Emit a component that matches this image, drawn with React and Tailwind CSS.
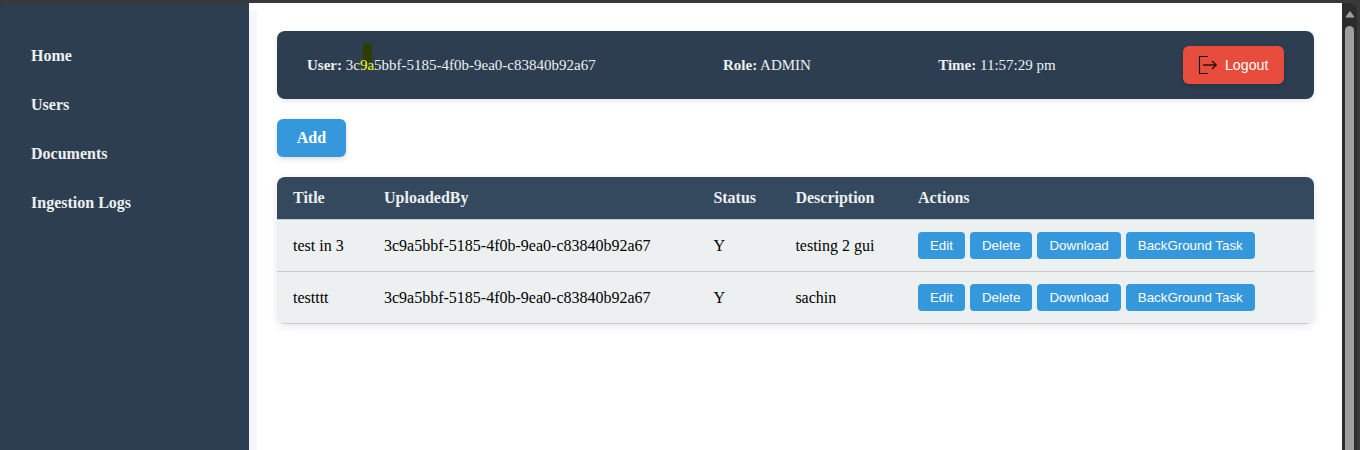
const navItems = ["Home", "Users", "Documents", "Ingestion Logs"];
const actions = ["Edit", "Delete", "Download", "BackGround Task"];
const owner = "3c9a5bbf-5185-4f0b-9ea0-c83840b92a67";
const rows = [
  { title: "test in 3", description: "testing 2 gui" },
  { title: "testttt", description: "sachin" },
];
const grid =
  "grid grid-cols-[91px_329.4px_82px_122.6px_1fr] items-center *:px-4";

function Sidebar() {
  return (
    <nav className="flex w-[249px] shrink-0 flex-col gap-[25px] rounded-tl-lg bg-[#2d3e50] pt-[41px] pl-[31px] font-bold text-[#ecf0f1]">
      {navItems.map((item) => (
        <a key={item}>{item}</a>
      ))}
    </nav>
  );
}

function LogoutIcon() {
  return (
    <svg width="20" height="20" viewBox="0 0 20 20" fill="none" className="shrink-0">
      <path d="M10 1.5H1.5V18.5H10" stroke="#000" strokeWidth="1.1" />
      <path d="M5 10H18" stroke="#000" strokeOpacity=".6" strokeWidth="2" />
      <path d="M14 6L18.2 10L14 14" stroke="#000" strokeOpacity=".85" strokeWidth="1.3" />
    </svg>
  );
}

function Header() {
  return (
    <header className="flex h-[68px] items-center justify-between rounded-lg bg-[#2d3e50] px-[30px] text-[15px] text-[#ecf0f1] shadow-[0_2px_5px_rgba(0,0,0,0.1)]">
      <div className="relative isolate">
        <b>User:</b> {owner.slice(0, 2)}
        <span className="text-[#f8fc00]">{owner.slice(2, 4)}</span>
        {owner.slice(4)}
        <span className="absolute top-[-11px] left-14 -z-10 h-[19px] w-[9px] bg-[#2d3e00]" />
      </div>
      <div>
        <b>Role:</b> ADMIN
      </div>
      <div>
        <b>Time:</b> 11:57:29 pm
      </div>
      <button className="flex h-[38px] w-[101px] items-center gap-[7px] rounded-md bg-[#e84c3d] pl-[15px] font-['Liberation_Sans',Arial,sans-serif] text-[14.2px] text-white shadow-[0_2px_4px_rgba(0,0,0,0.2)]">
        <LogoutIcon />
        <span className="pt-px">Logout</span>
      </button>
    </header>
  );
}

function DocumentTable() {
  return (
    <section className="mt-5 overflow-hidden rounded-lg bg-[#ecf0f1] text-black shadow-[0_2px_8px_rgba(0,0,0,0.1)]">
      <div className={`${grid} h-[43px] border-b border-[#c8cccf] bg-[#34495e] font-bold text-[#ecf0f1]`}>
        <span>Title</span>
        <span>UploadedBy</span>
        <span>Status</span>
        <span>Description</span>
        <span>Actions</span>
      </div>
      {rows.map((row) => (
        <div key={row.title} className={`${grid} h-[52px] border-b border-[#c8cccf]`}>
          <span>{row.title}</span>
          <span>{owner}</span>
          <span>Y</span>
          <span>{row.description}</span>
          <div className="flex gap-[5px]">
            {actions.map((action) => (
              <button
                key={action}
                className="h-[27px] rounded bg-[#3598dc] px-3 font-['Liberation_Sans',Arial,sans-serif] text-[13.33px] font-medium whitespace-nowrap text-white"
              >
                {action}
              </button>
            ))}
          </div>
        </div>
      ))}
    </section>
  );
}

function Scrollbar() {
  return (
    <div className="flex w-[15px] shrink-0 flex-col items-center rounded-tr-lg bg-[#2c2c2c] pt-[7px]">
      <svg width="10" height="8" viewBox="0 0 10 8">
        <path d="M5 1.5L9 7H1Z" fill="#9f9f9f" stroke="#9f9f9f" strokeLinejoin="round" />
      </svg>
      <div className="mt-2 w-[9px] flex-1 rounded-t-full bg-[#9f9f9f]" />
    </div>
  );
}

export default function App() {
  return (
    <div className="h-[450px] overflow-hidden bg-[#3b3938] pt-[3px] font-['Liberation_Serif','Times_New_Roman',serif] text-base">
      <div className="flex h-full pr-[3px]">
        <Sidebar />
        <div className="flex min-w-0 flex-1 bg-white">
          <div className="mt-2 w-2 shrink-0 bg-[#f4f6fa]" />
          <main className="flex-1 pt-7 pr-7 pl-5">
            <Header />
            <button className="mt-5 block h-[38px] w-[69px] rounded-md bg-[#3598dc] font-bold text-white shadow-[0_2px_5px_rgba(0,0,0,0.15)]">
              Add
            </button>
            <DocumentTable />
          </main>
        </div>
        <Scrollbar />
      </div>
    </div>
  );
}
